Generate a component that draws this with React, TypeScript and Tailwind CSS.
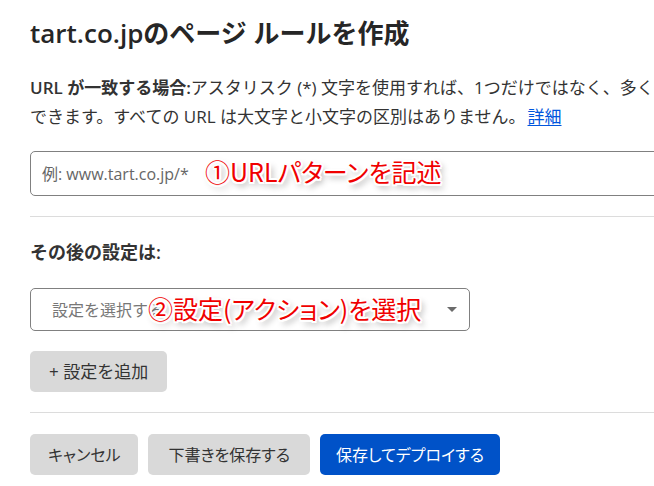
import React from "react";

const ann =
  "absolute whitespace-nowrap text-[25px] leading-none font-normal text-[#f00000] [font-family:'Noto_Sans_CJK_JP',sans-serif] [font-feature-settings:'palt'] [text-shadow:-1.5px_-1.5px_0_#fff,1.5px_-1.5px_0_#fff,-1.5px_1.5px_0_#fff,1.5px_1.5px_0_#fff,0_2px_0_#fff,2px_0_0_#fff,-2px_0_0_#fff,0_-2px_0_#fff,3px_4px_6px_rgba(0,0,0,0.45)]";

const palt = "[font-feature-settings:'palt']";

export default function App() {
  return (
    <div className="w-[654px] h-[486px] overflow-hidden bg-white text-[#333] [font-family:'Open_Sans','Noto_Sans_CJK_JP',sans-serif]">
      <div className="w-[900px] pl-[30px] pt-[17px] flex flex-col">
        <h1 className="text-[26px] leading-[32px] font-semibold text-[#262626] whitespace-nowrap">
          tart.co.jpのページ ルールを作成
        </h1>
        <p className="mt-[24px] text-[17px] leading-[29px] whitespace-nowrap">
          <span className="font-semibold">URL が一致する場合:</span>アスタリスク (*) 文字を使用すれば、1つだけではなく、多くの URL に一致するパターンを作成
          <br />
          できます。すべての URL は大文字と小文字の区別はありません。
          <span className="ml-[2px] text-[#0055dd] underline underline-offset-2">詳細</span>
        </p>
        <div className="relative mt-[20px] h-[45px] w-[700px] rounded-[5px] border border-[#808080] flex items-center pl-[11px]">
          <span className="text-[16px] text-[#666]">例: www.tart.co.jp/*</span>
          <span className={ann + " left-[174px] top-[7px]"}>①URLパターンを記述</span>
        </div>
        <div className="mt-[20px] h-px w-[700px] bg-[#dcdcdc]" />
        <div className="mt-[23px] text-[18px] leading-[24px] font-semibold">その後の設定は:</div>
        <div className="relative mt-[24px] h-[43px] w-[440px] rounded-[5px] border border-[#808080] flex items-center pl-[21px] pr-[12px]">
          <span className="text-[16px] text-[#777]">設定を選択する</span>
          <span className="ml-auto w-0 h-0 border-l-[5px] border-r-[5px] border-t-[5px] border-l-transparent border-r-transparent border-t-[#6b6b6b]" />
          <span className={ann + " left-[117px] top-[7px]"}>②設定(アクション)を選択</span>
        </div>
        <div className="mt-[20px]">
          <button className="h-[41px] px-[19px] rounded-[5px] bg-[#d9d9d9] text-[17px] text-[#333]">
            + 設定を追加
          </button>
        </div>
        <div className="mt-[20px] h-px w-[700px] bg-[#dcdcdc]" />
        <div className={"mt-[21px] flex gap-[10px] " + palt}>
          <button className="h-[41px] px-[18px] rounded-[5px] bg-[#d9d9d9] text-[16px] text-[#333]">
            キャンセル
          </button>
          <button className="h-[41px] px-[20px] rounded-[5px] bg-[#d9d9d9] text-[16px] text-[#333]">
            下書きを保存する
          </button>
          <button className="h-[41px] px-[16px] rounded-[5px] bg-[#0052c8] text-[16px] text-white">
            保存してデプロイする
          </button>
        </div>
      </div>
    </div>
  );
}
